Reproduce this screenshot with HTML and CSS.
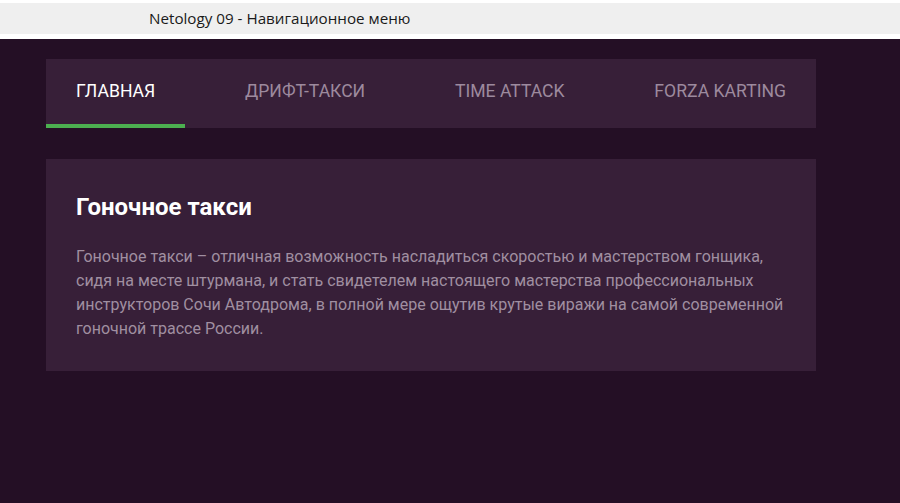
FILE: index.html
```html
<!DOCTYPE html>
<html lang="ru">
<head>
<meta charset="utf-8">
<title>Netology 09 - Навигационное меню</title>
<link rel="stylesheet" href="styles.css">
</head>
<body>
<header class="titlebar">
  <div class="titlebar-inner">Netology 09 - Навигационное меню</div>
</header>
<main class="page">
  <nav class="tabs">
    <a class="tab tab-active" href="#">Главная</a>
    <a class="tab" href="#">Дрифт-такси</a>
    <a class="tab" href="#">Time Attack</a>
    <a class="tab" href="#">Forza Karting</a>
  </nav>
  <section class="card">
    <h2 class="card-title">Гоночное такси</h2>
    <p class="card-text">Гоночное такси – отличная возможность насладиться скоростью и мастерством гонщика, сидя на месте штурмана, и стать свидетелем настоящего мастерства профессиональных инструкторов Сочи Автодрома, в полной мере ощутив крутые виражи на самой современной гоночной трассе России.</p>
  </section>
</main>
</body>
</html>
```

FILE: styles.css
```css
html, body {
  margin: 0;
  padding: 0;
  height: 100%;
}

body {
  background: #240f25;
  font-family: Roboto, "Noto Sans", sans-serif;
  display: flex;
  flex-direction: column;
}

.titlebar {
  background: #ffffff;
  padding: 3px 0 5px;
}

.titlebar-inner {
  background: #efefef;
  height: 31px;
  line-height: 31px;
  padding-left: 149px;
  font-family: "Open Sans", "Noto Sans", sans-serif;
  font-size: 15.2px;
  color: #1a1a1a;
}

.page {
  flex: 1;
  padding: 20px 46px 0;
  width: 770px;
}

.tabs {
  display: flex;
  justify-content: space-between;
  background: #371f38;
}

.tab {
  display: block;
  padding: 22px 30px 23px;
  border-bottom: 4px solid transparent;
  font-size: 17.6px;
  line-height: 20px;
  text-transform: uppercase;
  text-decoration: none;
  color: #9d8a9e;
}

.tab-active {
  color: #ffffff;
  border-bottom-color: #4caf50;
}

.card {
  margin-top: 31px;
  background: #371f38;
  padding: 34px 30px 30px;
}

.card-title {
  margin: 0 0 24px;
  font-size: 24px;
  line-height: 28px;
  font-weight: 700;
  color: #ffffff;
}

.card-text {
  margin: 0;
  font-size: 16px;
  line-height: 24px;
  color: #a08fa1;
}
```
